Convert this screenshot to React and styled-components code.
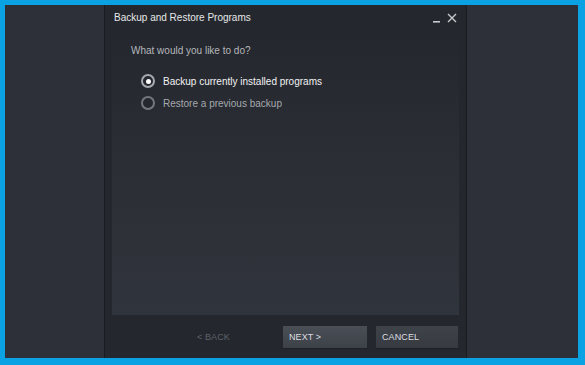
import React, { useState } from "react";
import styled, { createGlobalStyle } from "styled-components";

const Global = createGlobalStyle`
  html, body { margin: 0; padding: 0; }
  body {
    background: #0aa2e2;
    font-family: "Liberation Sans", Arial, sans-serif;
    width: 585px;
    height: 365px;
    overflow: hidden;
  }
`;

const Frame = styled.div`
  box-sizing: border-box;
  margin: 5px 7px 7px 5px;
  height: 353px;
  background: #2d3038;
  display: flex;
  padding-left: 99px;
`;

const Dialog = styled.div`
  box-sizing: border-box;
  width: 363px;
  height: 100%;
  background: #24272d;
  border-left: 1px solid #1a1c20;
  border-right: 1px solid #1a1c20;
  display: flex;
  flex-direction: column;
`;

const TitleBar = styled.div`
  height: 25px;
  display: flex;
  align-items: center;
  padding: 0 9px 2px 9px;
  color: #e6e7e9;
  font-size: 10px;
`;

const Title = styled.div`
  flex: 1;
`;

const WinButtons = styled.div`
  display: flex;
  align-items: center;
  gap: 6px;
  color: #c6c8cc;
`;

const Panel = styled.div`
  flex: 1;
  margin: 0 7px;
  background: linear-gradient(to bottom, #24272d 0%, #2a2d34 40%, #30343c 100%);
  padding: 13px 19px;
  display: flex;
  flex-direction: column;
`;

const Question = styled.div`
  color: #b4b7bc;
  font-size: 10px;
  margin-bottom: 18px;
`;

const Options = styled.div`
  display: flex;
  flex-direction: column;
  gap: 8px;
  padding-left: 10px;
`;

const Option = styled.label`
  display: flex;
  align-items: center;
  gap: 8px;
  font-size: 10px;
  color: ${(p) => (p.$checked ? "#f2f3f4" : "#a6a9ae")};
  cursor: pointer;
  height: 14px;
`;

const Ring = styled.span`
  box-sizing: border-box;
  width: 14px;
  height: 14px;
  border-radius: 50%;
  border: 2px solid ${(p) => (p.$checked ? "#a6a9ae" : "#74787e")};
  background: #25282e;
  display: flex;
  align-items: center;
  justify-content: center;
  &::after {
    content: "";
    width: 5px;
    height: 5px;
    border-radius: 50%;
    background: #ffffff;
    display: ${(p) => (p.$checked ? "block" : "none")};
  }
`;

const Footer = styled.div`
  height: 43px;
  display: flex;
  align-items: center;
  justify-content: flex-end;
  gap: 9px;
  padding: 1px 8px 0 0;
  box-sizing: border-box;
`;

const Button = styled.button`
  box-sizing: border-box;
  width: ${(p) => p.$w}px;
  height: 22px;
  border: none;
  text-align: left;
  padding: 0 6px;
  font-family: "Liberation Sans", Arial, sans-serif;
  font-size: 9px;
  letter-spacing: 0.1px;
  color: ${(p) => (p.$disabled ? "#5e636a" : "#dcdee1")};
  background: ${(p) =>
    p.$disabled
      ? "transparent"
      : p.$primary
      ? "linear-gradient(to bottom, #4a4f57, #3d4148)"
      : "linear-gradient(to bottom, #3e4249, #373a41)"};
  box-shadow: ${(p) => (p.$disabled ? "none" : "0 1px 0 #1f2126")};
`;

export default function App() {
  const [choice, setChoice] = useState(0);
  const opts = ["Backup currently installed programs", "Restore a previous backup"];
  return (
    <>
      <Global />
      <Frame>
        <Dialog>
          <TitleBar>
            <Title>Backup and Restore Programs</Title>
            <WinButtons>
              <svg width="8" height="10" viewBox="0 0 8 10">
                <rect x="0" y="8" width="7" height="1.6" fill="#c6c8cc" />
              </svg>
              <svg width="10" height="10" viewBox="0 0 10 10">
                <path d="M1 1 L9 9 M9 1 L1 9" stroke="#c6c8cc" strokeWidth="1.4" />
              </svg>
            </WinButtons>
          </TitleBar>
          <Panel>
            <Question>What would you like to do?</Question>
            <Options>
              {opts.map((o, i) => (
                <Option key={o} $checked={choice === i} onClick={() => setChoice(i)}>
                  <Ring $checked={choice === i} />
                  {o}
                </Option>
              ))}
            </Options>
          </Panel>
          <Footer>
            <Button $w={83} $disabled>&lt; BACK</Button>
            <Button $w={84} $primary>NEXT &gt;</Button>
            <Button $w={82}>CANCEL</Button>
          </Footer>
        </Dialog>
      </Frame>
    </>
  );
}
